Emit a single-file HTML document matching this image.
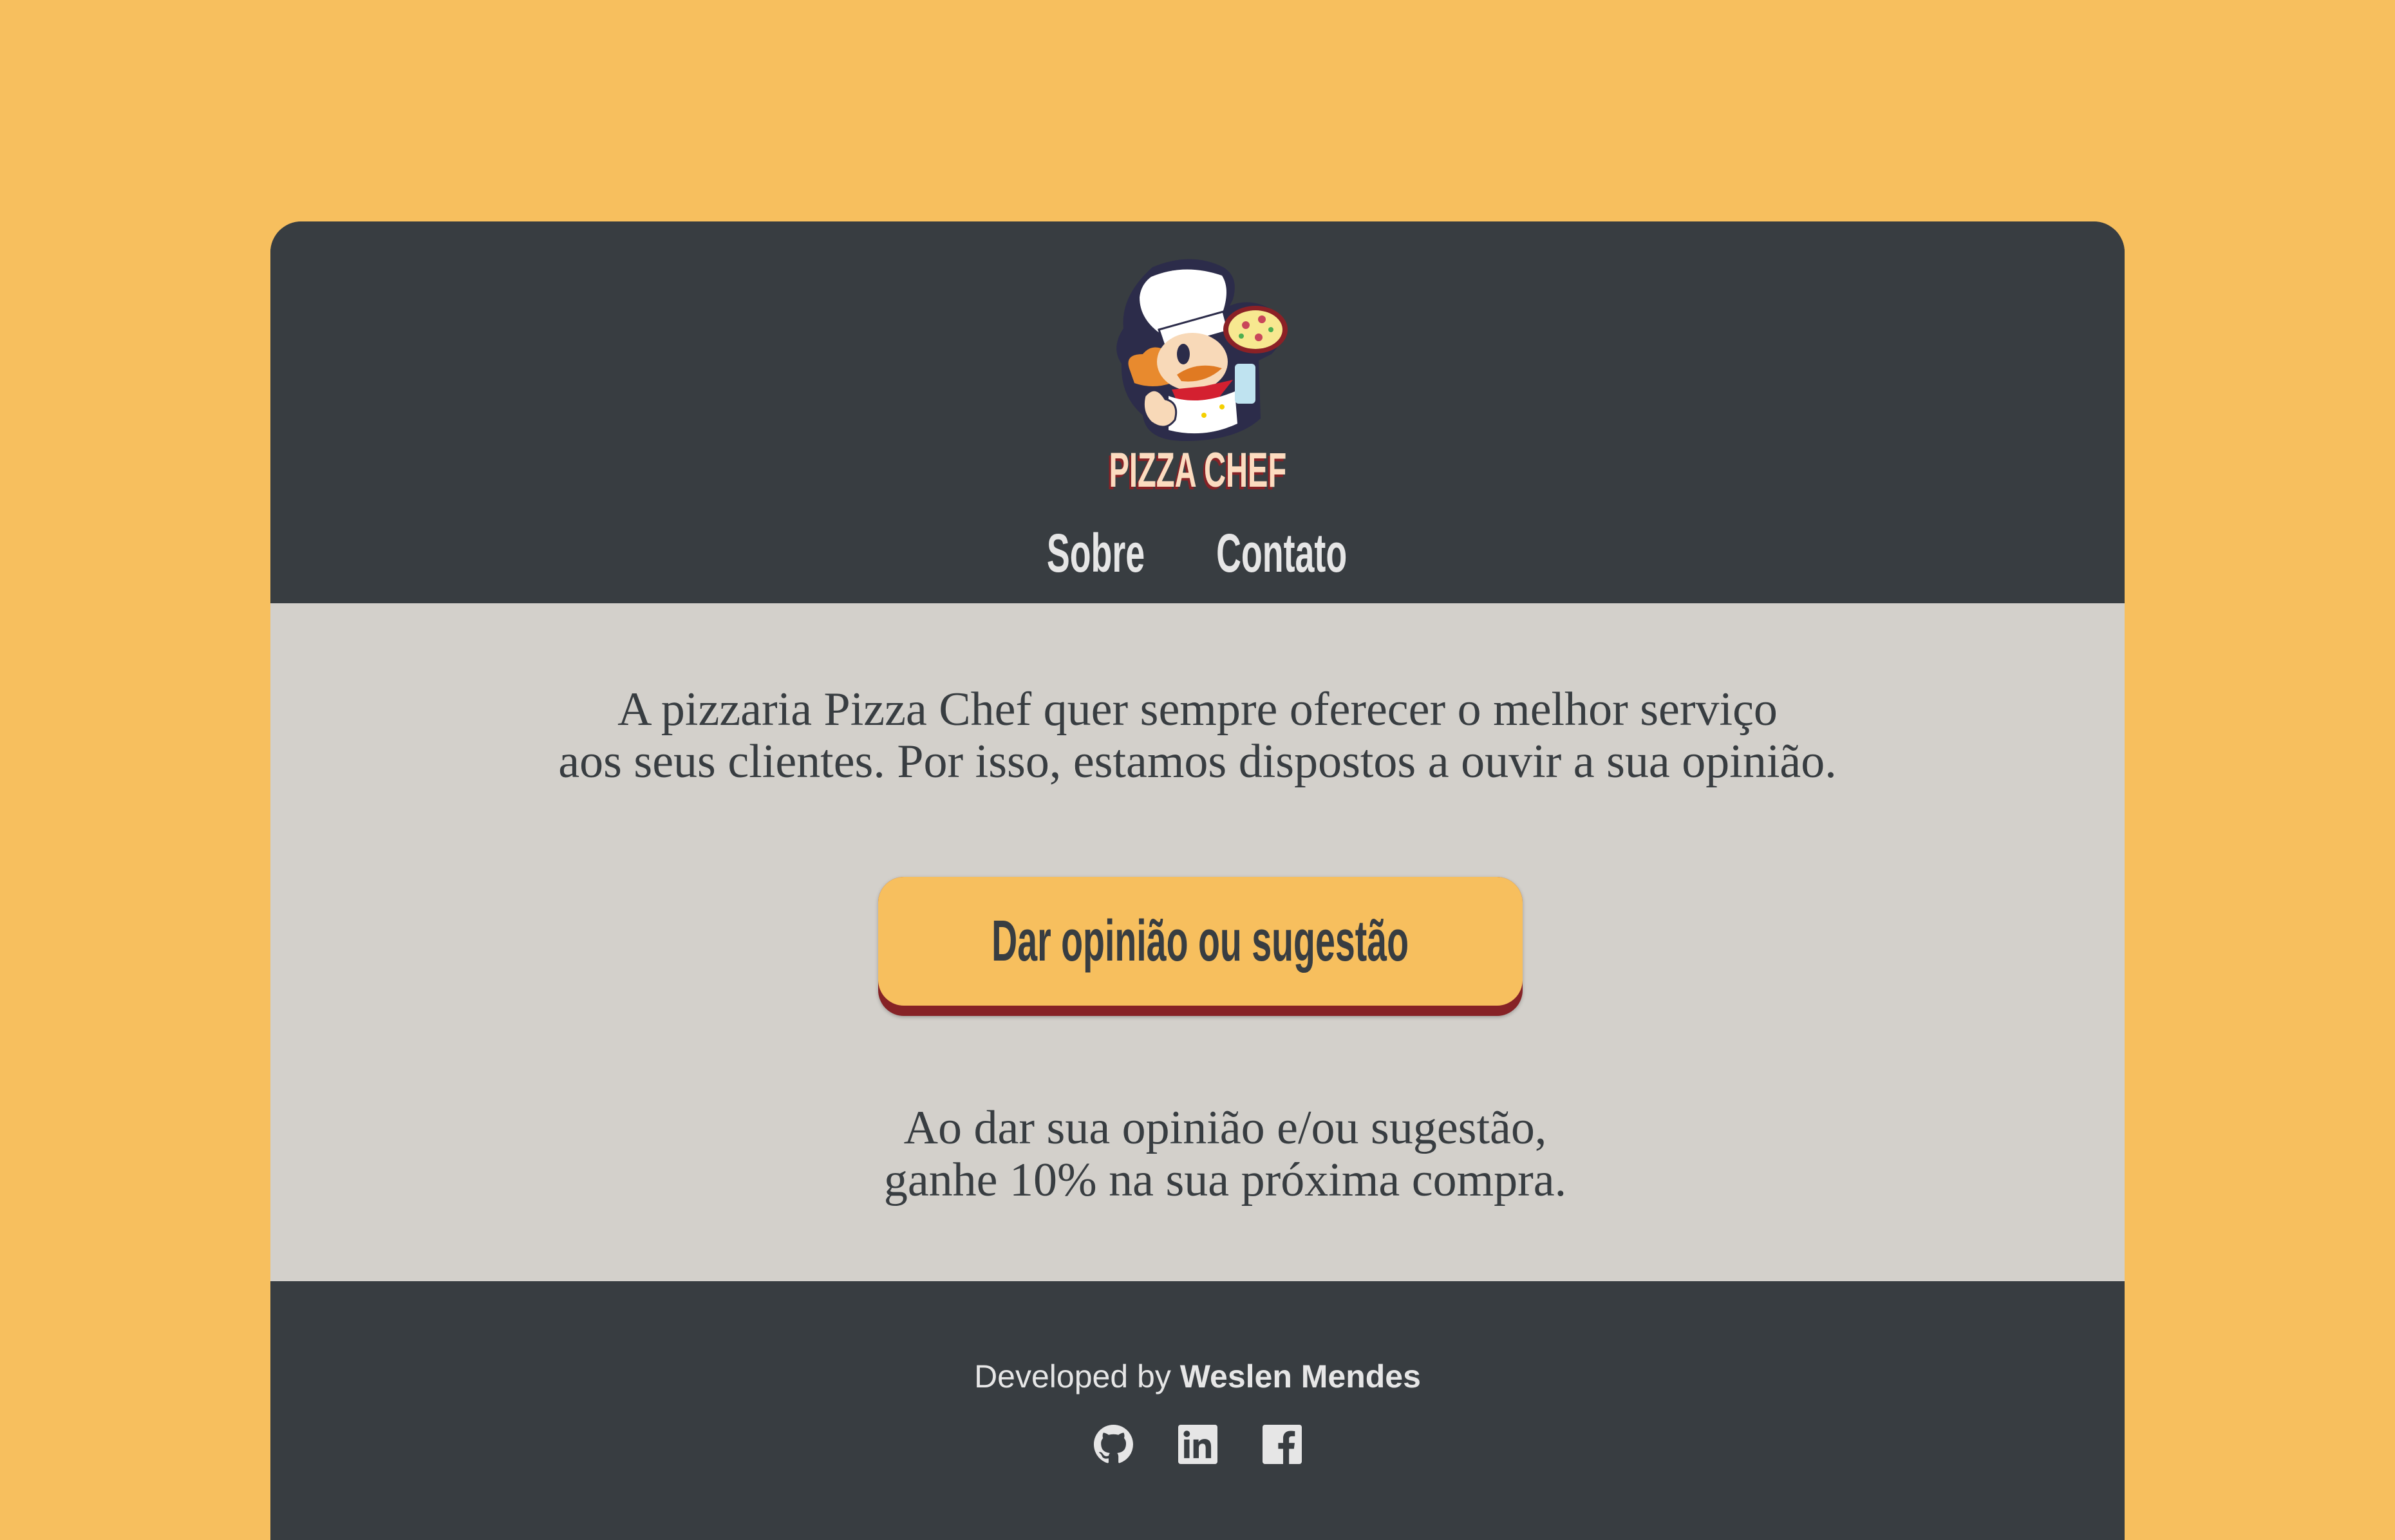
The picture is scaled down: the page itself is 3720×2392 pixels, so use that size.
<!DOCTYPE html>
<html><head><meta charset="utf-8"><style>
html,body{margin:0;padding:0;overflow:hidden}
body{width:3720px;height:2392px;background:#F7BF5E;position:relative;overflow:hidden;font-family:"Liberation Sans",sans-serif}
.card{position:absolute;left:420px;top:344px;width:2880px;height:2048px;border-radius:48px 48px 0 0;overflow:hidden;background:#383D41}
.hdr{position:absolute;left:0;top:0;width:2880px;height:593px;background:#383D41}
.main{position:absolute;left:0;top:593px;width:2880px;height:1053px;background:#D3D0CB}
.ftr{position:absolute;left:0;top:1646px;width:2880px;height:402px;background:#383D41}
.row{position:absolute;display:flex;justify-content:center;align-items:center}
.cond{font-weight:bold;white-space:nowrap;flex:none;transform:scaleX(0.64);transform-origin:center}
.nav{top:470px;height:90px;font-size:84px;color:#E6E6E6;line-height:1}
.p{position:absolute;left:0;width:2880px;text-align:center;font-family:"Liberation Serif",serif;font-size:74px;line-height:81px;color:#383D41}
.btn{position:absolute;left:944px;top:425px;width:1001px;height:216px;border-radius:40px;background:#862226;box-shadow:0 2px 6px rgba(0,0,0,.25)}
.btn .top{position:absolute;left:0;top:0;width:1001px;height:200px;border-radius:40px;background:#F7BF5E;display:flex;justify-content:center;align-items:center}
.btn .cond{font-size:90px;color:#383D41;transform:scaleX(0.617)}
</style></head><body>
<div class="card">
 <div class="hdr">
  <svg style="position:absolute;left:1300px;top:56px" width="290" height="290" viewBox="0 0 290 290">
   <path d="M70 15 Q130 -10 180 15 Q205 30 195 65 L190 75 Q225 60 262 85 Q285 120 255 150 L235 160 L238 250 Q200 285 120 285 Q60 285 55 245 Q20 215 22 165 Q5 140 25 110 Q20 60 70 15Z" fill="#2c2c4a"/>
   <path d="M68 30 Q120 8 178 28 Q192 50 178 88 L82 118 Q50 95 50 62 Q52 42 68 30Z" fill="#fff"/>
   <path d="M80 112 L180 84 L188 114 L90 142Z" fill="#fff" stroke="#2c2c4a" stroke-width="3"/>
   <path d="M35 175 Q25 150 55 150 Q70 132 92 145 L100 195 Q70 205 42 195Z" fill="#E88A2E"/>
   <ellipse cx="132" cy="162" rx="55" ry="45" fill="#F8D9B8"/>
   <ellipse cx="118" cy="150" rx="10" ry="16" fill="#2c2c4a"/>
   <path d="M108 182 Q140 160 178 172 Q152 196 115 192Z" fill="#E07A22"/>
   <path d="M100 205 L150 200 L195 190 L165 228 L110 228Z" fill="#D42030"/>
   <path d="M95 215 Q140 232 198 208 L202 258 Q150 282 95 268Z" fill="#fff"/>
   <circle cx="150" cy="245" r="4" fill="#F5D000"/><circle cx="178" cy="232" r="4" fill="#F5D000"/>
   <path d="M58 215 Q75 195 90 220 Q112 225 105 252 Q90 272 68 256 Q52 240 58 215Z" fill="#F8D9B8" stroke="#2c2c4a" stroke-width="3"/>
   <rect x="198" y="165" width="32" height="62" rx="6" fill="#BFE3F0"/>
   <ellipse cx="230" cy="112" rx="50" ry="37" fill="#8B2126"/>
   <ellipse cx="230" cy="112" rx="42" ry="30" fill="#F7E890"/>
   <circle cx="215" cy="105" r="6" fill="#C9465A"/><circle cx="240" cy="96" r="6" fill="#C9465A"/><circle cx="235" cy="124" r="6" fill="#C9465A"/><circle cx="254" cy="112" r="4" fill="#4CAF50"/><circle cx="208" cy="122" r="4" fill="#4CAF50"/>
  </svg>
  <div class="row" style="left:0;width:2880px;top:346px;height:80px;font-size:76px;color:#FCDCC0"><span class="cond" style="transform:scaleX(0.62);text-shadow:-5px 4px 0 #862226">PIZZA CHEF</span></div>
  <div class="row nav" style="left:1205px;width:155px"><span class="cond">Sobre</span></div>
  <div class="row nav" style="left:1473px;width:195px"><span class="cond">Contato</span></div>
 </div>
 <div class="main">
  <div class="p" style="top:125px">A pizzaria Pizza Chef quer sempre oferecer o melhor serviço<br>aos seus clientes. Por isso, estamos dispostos a ouvir a sua opinião.</div>
  <div class="btn"><div class="top"><span class="cond">Dar opinião ou sugestão</span></div></div>
  <div class="p" style="top:775px;left:43px">Ao dar sua opinião e/ou sugestão,<br>ganhe 10% na sua próxima compra.</div>
 </div>
 <div class="ftr">
  <div style="position:absolute;left:0;width:2880px;top:118px;text-align:center;font-size:50px;color:#E6E6E6;line-height:60px">Developed by <b>Weslen Mendes</b></div>
  <svg style="position:absolute;left:1279px;top:223px" width="61" height="61" viewBox="0 0 16 16"><path fill="#E6E6E6" d="M8 0C3.58 0 0 3.58 0 8c0 3.54 2.29 6.53 5.47 7.59.4.07.55-.17.55-.38 0-.19-.01-.82-.01-1.49-2.01.37-2.53-.49-2.69-.94-.09-.23-.48-.94-.82-1.13-.28-.15-.68-.52-.01-.53.63-.01 1.08.58 1.23.82.72 1.21 1.87.87 2.33.66.07-.52.28-.87.51-1.07-1.78-.2-3.64-.89-3.64-3.95 0-.87.31-1.59.82-2.15-.08-.2-.36-1.02.08-2.12 0 0 .67-.21 2.2.82.64-.18 1.32-.27 2-.27.68 0 1.36.09 2 .27 1.53-1.04 2.2-.82 2.2-.82.44 1.1.16 1.92.08 2.12.51.56.82 1.27.82 2.15 0 3.07-1.87 3.75-3.65 3.95.29.25.54.73.54 1.48 0 1.07-.01 1.93-.01 2.2 0 .21.15.46.55.38A8.013 8.013 0 0016 8c0-4.42-3.58-8-8-8z"/></svg>
  <svg style="position:absolute;left:1410px;top:223px" width="61" height="61" viewBox="0 0 16 16"><rect width="16" height="16" rx="1" fill="#E6E6E6"/><rect x="2.4" y="6" width="2.2" height="7.6" fill="#383D41"/><circle cx="3.5" cy="3.7" r="1.3" fill="#383D41"/><path fill="#383D41" d="M6.2 6h2.1v1.1c.4-.7 1.2-1.3 2.4-1.3 2.2 0 2.7 1.4 2.7 3.3v4.5h-2.2V9.6c0-.9-.1-1.9-1.3-1.9s-1.5.9-1.5 1.9v4H6.2z"/></svg>
  <svg style="position:absolute;left:1541px;top:223px" width="61" height="61" viewBox="0 0 16 16"><rect width="16" height="16" rx="1" fill="#E6E6E6"/><path fill="#383D41" d="M8.4 16V9.8H6.4V7.4h2V5.6c0-2 1.2-3.1 3-3.1.9 0 1.6.1 1.8.1v2.1h-1.2c-1 0-1.2.5-1.2 1.1v1.6h2.3l-.3 2.4h-2V16z"/></svg>
 </div>
</div>
</body></html>
